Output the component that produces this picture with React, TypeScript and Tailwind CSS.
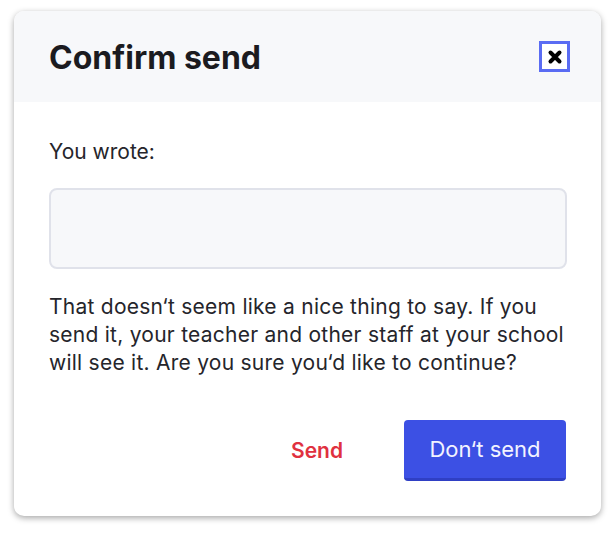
import React from "react";

export default function App() {
  return (
    <div className="w-[614px] h-[533px] bg-white pt-[11px] pl-[14px] font-['Inter',sans-serif]">
      <div className="w-[587px] h-[505px] rounded-[10px] bg-white shadow-[0_2px_6px_rgba(0,0,0,0.35)] overflow-hidden flex flex-col">
        <div className="h-[91px] bg-[#f7f8fa] flex items-center justify-between pl-[35px] pr-[31px]">
          <h1 className="text-[32px] font-bold text-[#1b1b1f] tracking-[0px] leading-[40px] mt-[2px]">Confirm send</h1>
          <button className="w-[31px] h-[31px] border-[3px] border-[#5a6cf3] bg-white flex items-center justify-center">
            <svg width="16" height="16" viewBox="0 0 16 16">
              <path d="M3.5 3.5 L12.5 12.5 M12.5 3.5 L3.5 12.5" stroke="#000" strokeWidth="4" strokeLinecap="round" />
            </svg>
          </button>
        </div>
        <div className="px-[35px] pt-[36px] text-[#25252b]">
          <p className="text-[21px] leading-[28px]">You wrote:</p>
          <div className="mt-[22px] w-[518px] h-[81px] rounded-[8px] border-2 border-[#e0e2ea] bg-[#f7f8fa]" />
          <p className="mt-[24px] text-[21px] leading-[28px] tracking-[0.25px] whitespace-nowrap">
            That doesn‘t seem like a nice thing to say. If you
            <br />
            send it, your teacher and other staff at your school
            <br />
            will see it. Are you sure you‘d like to continue?
          </p>
          <div className="mt-[43px] flex items-center justify-end">
            <button className="text-[21px] font-semibold text-[#e0313f] mr-[61px]">Send</button>
            <button className="w-[162px] h-[61px] rounded-[4px] bg-[#3c50e4] border-b-[3px] border-[#2f3fc4] text-[22px] text-[#f2f3ff]">Don‘t send</button>
          </div>
        </div>
      </div>
    </div>
  );
}
